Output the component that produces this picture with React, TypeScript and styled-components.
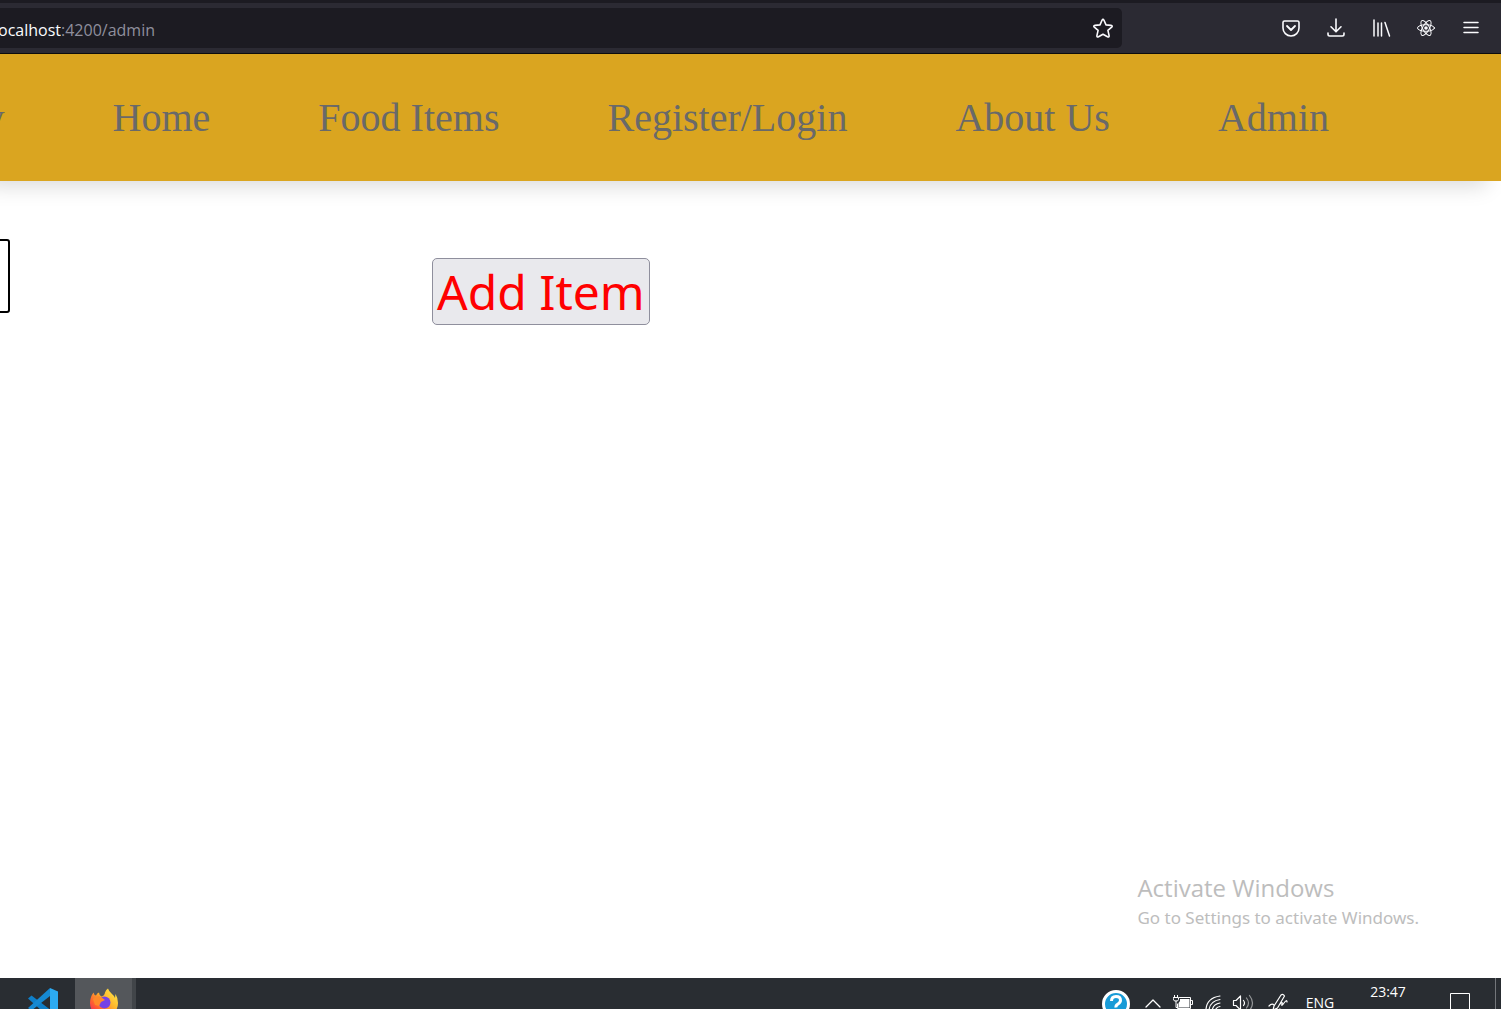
import React from "react";
import styled, { createGlobalStyle } from "styled-components";

const ui = `"Open Sans", "Noto Sans", sans-serif`;

const GlobalStyle = createGlobalStyle`
  * { box-sizing: border-box; }
  body { margin: 0; background: #fff; overflow-x: hidden; }
  button { border: 0; padding: 0; background: none; font: inherit; color: inherit; cursor: pointer; }
`;

const Screen = styled.div`
  display: flex;
  flex-direction: column;
  min-height: 100vh;
  font-family: ${ui};
`;

const Toolbar = styled.header`
  position: relative;
  z-index: 1;
  display: flex;
  align-items: center;
  height: 54px;
  padding-right: 8px;
  background: #2b2a33;
  border-top: 3px solid #1c1b22;
  border-bottom: 1px solid #0c0c0d;
  color: #fbfbfe;
`;

const AddressBar = styled.div`
  flex: 1;
  display: flex;
  align-items: center;
  height: 40px;
  margin-right: 146px;
  padding-right: 4px;
  background: #1c1b22;
  border-radius: 0 5px 5px 0;
  font-size: 16px;
  line-height: 24px;
`;

const Host = styled.label`
  display: flex;
  justify-content: flex-end;
  width: 61px;
  padding-top: 3px;
  overflow: hidden;
`;

const PathInput = styled.input`
  flex: 1;
  min-width: 0;
  border: 0;
  padding: 3px 0 0;
  outline: 0;
  background: transparent;
  color: #8f8f9d;
  font: inherit;
`;

const BarButton = styled.button<{ $width: number }>`
  display: flex;
  flex: none;
  align-items: center;
  justify-content: center;
  width: ${(p) => p.$width}px;
  height: 100%;
`;

const Nav = styled.nav`
  display: flex;
  align-items: center;
  justify-content: flex-end;
  gap: 108px;
  height: 127px;
  padding-right: 172px;
  background: #daa520;
  box-shadow: -14px 5px 20px rgba(0, 0, 0, 0.15);
`;

const NavLink = styled.a`
  flex: none;
  color: #696969;
  font-family: "Liberation Serif", "Times New Roman", serif;
  font-size: 40px;
  line-height: 48px;
  text-decoration: none;
`;

const Main = styled.main`
  flex: 1;
  display: flex;
  flex-direction: column;
  justify-content: space-between;
`;

const ItemForm = styled.form`
  display: flex;
  align-items: flex-end;
  gap: 422px;
  padding-top: 58px;
`;

const FieldClip = styled.div`
  display: flex;
  flex: none;
  justify-content: flex-end;
  width: 10px;
  margin-bottom: 12px;
  overflow: hidden;
`;

const ItemInput = styled.input`
  flex: none;
  width: 300px;
  height: 74px;
  border: 2px solid #000;
  border-radius: 3px;
  background: #fff;
  font-size: 48px;
`;

const AddButton = styled.button`
  height: 67px;
  padding: 0 4px;
  background: #e9e9ed;
  border: 1px solid #8f8f9d;
  border-radius: 5px;
  color: #f00;
  font-family: "Noto Sans", sans-serif;
  font-size: 48px;
  line-height: 64px;
`;

const Watermark = styled.aside`
  align-self: flex-end;
  padding: 0 82px 46px 0;
  color: #bdbdbd;
`;

const WatermarkTitle = styled.div`
  font-size: 24px;
  line-height: 32px;
`;

const WatermarkText = styled.div`
  font-family: "Noto Sans", sans-serif;
  font-size: 17px;
  line-height: 28px;
`;

const Taskbar = styled.footer`
  height: 31px;
  overflow: hidden;
  background: #292d32;
  color: #fff;
  font-size: 14px;
  line-height: 20px;
`;

const TaskRow = styled.div`
  display: flex;
  height: 50px;
`;

const Apps = styled.div`
  flex: 1;
  display: flex;
  padding-left: 11px;
`;

const AppButton = styled(BarButton)<{ $active?: boolean }>`
  background: ${(p) => (p.$active ? "#54575b" : "transparent")};
  border-right: ${(p) => (p.$active ? "4px solid #414549" : "0")};
`;

const Clock = styled.time`
  width: 92px;
  padding-top: 4px;
  text-align: center;
`;

const ShowDesktop = styled.button`
  width: 6px;
  margin-left: 9px;
  border-left: 1px solid #73767a;
`;

const line = {
  fill: "none",
  stroke: "currentColor",
  strokeLinecap: "round" as const,
  strokeLinejoin: "round" as const,
};

const StarIcon = () => (
  <svg width="22" height="22" viewBox="0 -1 22 22" {...line} strokeWidth="1.6">
    <path d="M10 2.3q1-1.8 2 0l2 4.6 5 .5q2 .3.7 1.7l-3.8 3.3 1.2 5.2q.2 2-1.6 1.2L11 16.2l-4.5 2.6q-1.8.8-1.6-1.2l1.2-5.2-3.8-3.3Q1 7.700 3 7.400l5-.5z" />
  </svg>
);

const PocketIcon = () => (
  <svg width="20" height="20" viewBox="0 0 20 20" {...line} strokeWidth="1.6">
    <path d="M3.500 3h13Q18 3 18 4.500V10a8 8 0 0 1-16 0V4.500Q2 3 3.500 3Z" />
    <path d="m6 8 4 4 4-4" strokeWidth="1.800" />
  </svg>
);

const DownloadIcon = () => (
  <svg width="20" height="20" viewBox="0 0 20 20" {...line} strokeWidth="1.6">
    <path d="M10 1v12.500M5 8.800l5 5 5-5M2 15v1.300Q2 18 3.700 18h12.600q1.700 0 1.700-1.700V15" />
  </svg>
);

const LibraryIcon = () => (
  <svg width="20" height="20" viewBox="0 0 20 20" {...line} strokeWidth="1.500">
    <path d="M3 2v16M7 5v13M10.500 5v13M14 4.500l4.500 13.500" />
  </svg>
);

const ReactIcon = () => (
  <svg width="20" height="20" viewBox="0 0 20 20" {...line} strokeWidth="1">
    <ellipse cx="10" cy="10" rx="8.500" ry="3.300" />
    <ellipse cx="10" cy="10" rx="8.500" ry="3.300" transform="rotate(60 10 10)" />
    <ellipse cx="10" cy="10" rx="8.500" ry="3.300" transform="rotate(120 10 10)" />
    <circle cx="10" cy="10" r="1.800" fill="currentColor" stroke="none" />
  </svg>
);

const MenuIcon = () => (
  <svg width="20" height="20" viewBox="0 0 20 20" {...line} strokeWidth="1.500">
    <path d="M3 4.500h14M3 9.500h14M3 14.500h14" />
  </svg>
);

const CodeIcon = () => (
  <svg width="30" height="30" viewBox="0 0 30 30">
    <path d="M0 10.500 3.500 7.500 24 23v6L22 30z" fill="#0f7fc9" />
    <path d="M0 20 22 0v8L3.500 22.500z" fill="#1689d2" />
    <path d="m22 0 8 3.500v23L22 30z" fill="#2cabf2" />
  </svg>
);

const FirefoxIcon = () => (
  <svg width="30" height="30" viewBox="0 0 30 30">
    <defs>
      <linearGradient id="flame" x1="1" y1="0" x2="0" y2="1">
        <stop offset="0" stopColor="#fff44f" />
        <stop offset=".4" stopColor="#ffb52b" />
        <stop offset=".7" stopColor="#ff5f30" />
        <stop offset="1" stopColor="#e8157a" />
      </linearGradient>
    </defs>
    <path
      d="M4.500 4.500Q5 7 7 7.500q1-2.500 3-3 0 2.500 2.500 4 3-.5 3.500-4Q17 1.500 19 .5q1 3 3.500 5Q25 7.500 26 10l.5-4Q29 10 29 15a14 14 0 0 1-28 0q0-6 3.500-10.500z"
      fill="url(#flame)"
    />
    <circle cx="15.500" cy="14.500" r="6" fill="#7543e5" />
    <path d="M4 11q4-4 8-2l4 3-4 2-2 4-4-1z" fill="#ff8a2a" />
  </svg>
);

const HelpIcon = () => (
  <svg width="28" height="28" viewBox="0 0 28 28">
    <circle cx="14" cy="15" r="12.500" fill="#189bd7" stroke="#fff" strokeWidth="3" />
    <path
      d="M9.500 12Q9.500 7.500 14 7.500t4.500 3.800q0 2.200-2.500 3.700t-2 3.500"
      fill="none"
      stroke="#fff"
      strokeWidth="3"
    />
    <circle cx="14" cy="22" r="1.800" fill="#fff" />
  </svg>
);

const ChevronIcon = () => (
  <svg width="16" height="16" viewBox="0 0 16 16" {...line} strokeWidth="1.300">
    <path d="m1 12 7-7 7 7" />
  </svg>
);

const BatteryIcon = () => (
  <svg width="20" height="16" viewBox="0 0 20 16" {...line} strokeWidth="1">
    <path d="M6.500 2.500h11v11h-13V9M18.500 5.500h1v4h-1" />
    <path d="M7 4h9.500v8.500H5.500V8L7 6z" fill="currentColor" stroke="none" />
    <path d="M1.500 0v2M4.500 0v2M.5 2.500h5v2l-1 1.500h-3L.5 4.500zM3 6v6.500h2" />
  </svg>
);

const WifiIcon = () => (
  <svg width="18" height="18" viewBox="0 0 18 18" {...line} strokeWidth="1.200">
    <path d="M2 15Q3 4 16 2M5 16Q6 7 16 5.500M8 17q1-7 8-8M11 17q1-4 5-4.500" />
  </svg>
);

const SpeakerIcon = () => (
  <svg width="22" height="18" viewBox="0 0 22 18" {...line} strokeWidth="1.200">
    <path d="M1.500 6.500H4L8.500 2v14L4 11.500H1.500zM11.500 6.500q2 2.500 0 5" />
    <path d="M14.500 4q4 5 0 10M17.500 1.500q6 7.500 0 15" opacity=".5" />
  </svg>
);

const PenIcon = () => (
  <svg width="20" height="20" viewBox="0 0 20 20" {...line} strokeWidth="1.200">
    <path d="M6 13 13 2q2-1.500 3.500 1L9.500 15 5 17zM1 13q3-3 5-1M12 11q3-3 2 0t2-1 3-1M2 18q6 1 10-2" />
  </svg>
);

const NoticeIcon = () => (
  <svg width="20" height="20" viewBox="0 0 20 20" fill="none" stroke="currentColor">
    <path d="M.5 .5h19v16H13l-3 3v-3H.5z" />
  </svg>
);

const browserTools = [
  { label: "Save to Pocket", Icon: PocketIcon },
  { label: "Downloads", Icon: DownloadIcon },
  { label: "Library", Icon: LibraryIcon },
  { label: "React tools", Icon: ReactIcon },
  { label: "Menu", Icon: MenuIcon },
];

const links = ["y", "Home", "Food Items", "Register/Login", "About Us", "Admin"];

const tray = [
  { label: "Help", width: 44, Icon: HelpIcon },
  { label: "Hidden icons", width: 30, Icon: ChevronIcon },
  { label: "Battery", width: 30, Icon: BatteryIcon },
  { label: "Network", width: 30, Icon: WifiIcon },
  { label: "Volume", width: 30, Icon: SpeakerIcon },
  { label: "Pen", width: 40, Icon: PenIcon },
];

export default function App() {
  return (
    <Screen>
      <GlobalStyle />
      <Toolbar>
        <AddressBar>
          <Host htmlFor="address">localhost</Host>
          <PathInput id="address" type="text" defaultValue=":4200/admin" />
          <BarButton $width={30} type="button" aria-label="Bookmark">
            <StarIcon />
          </BarButton>
        </AddressBar>
        {browserTools.map(({ label, Icon }) => (
          <BarButton key={label} $width={45} type="button" aria-label={label}>
            <Icon />
          </BarButton>
        ))}
      </Toolbar>
      <Nav>
        {links.map((text) => (
          <NavLink key={text} href="#">
            {text}
          </NavLink>
        ))}
      </Nav>
      <Main>
        <ItemForm onSubmit={(e) => e.preventDefault()}>
          <FieldClip>
            <ItemInput type="text" aria-label="Item" />
          </FieldClip>
          <AddButton type="submit">Add Item</AddButton>
        </ItemForm>
        <Watermark>
          <WatermarkTitle>Activate Windows</WatermarkTitle>
          <WatermarkText>Go to Settings to activate Windows.</WatermarkText>
        </Watermark>
      </Main>
      <Taskbar>
        <TaskRow>
          <Apps>
            <AppButton $width={64} type="button" aria-label="Code editor">
              <CodeIcon />
            </AppButton>
            <AppButton $width={61} $active type="button" aria-label="Firefox">
              <FirefoxIcon />
            </AppButton>
          </Apps>
          {tray.map(({ label, width, Icon }) => (
            <BarButton key={label} $width={width} type="button" aria-label={label}>
              <Icon />
            </BarButton>
          ))}
          <BarButton $width={44} type="button">
            ENG
          </BarButton>
          <Clock>23:47</Clock>
          <BarButton $width={52} type="button" aria-label="Notifications">
            <NoticeIcon />
          </BarButton>
          <ShowDesktop type="button" aria-label="Show desktop" />
        </TaskRow>
      </Taskbar>
    </Screen>
  );
}
